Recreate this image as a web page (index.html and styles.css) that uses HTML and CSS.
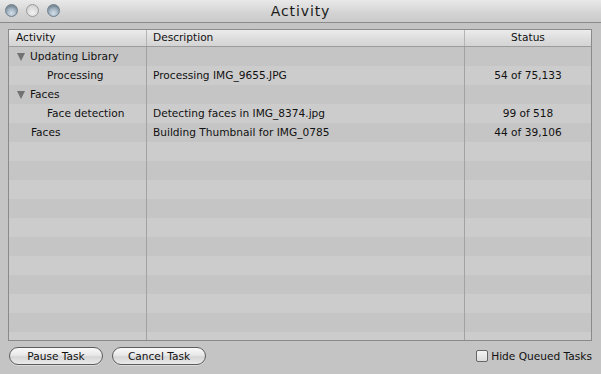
FILE: index.html
```html
<!DOCTYPE html>
<html>
<head>
<meta charset="utf-8">
<link rel="stylesheet" href="styles.css">
</head>
<body>
<div class="window">
  <div class="titlebar">
    <div class="lights">
      <span class="light graphite"></span>
      <span class="light hollow"></span>
      <span class="light graphite"></span>
    </div>
    <div class="title">Activity</div>
  </div>
  <div class="content">
    <div class="table">
      <div class="row head">
        <div class="cell c1">Activity</div>
        <div class="cell c2">Description</div>
        <div class="cell c3">Status</div>
      </div>
      <div class="body">
        <div class="row odd">
          <div class="cell c1 lvl0"><span class="tri"></span>Updating Library</div>
          <div class="cell c2"></div>
          <div class="cell c3"></div>
        </div>
        <div class="row even">
          <div class="cell c1 lvl1">Processing</div>
          <div class="cell c2">Processing IMG_9655.JPG</div>
          <div class="cell c3">54 of 75,133</div>
        </div>
        <div class="row odd">
          <div class="cell c1 lvl0"><span class="tri"></span>Faces</div>
          <div class="cell c2"></div>
          <div class="cell c3"></div>
        </div>
        <div class="row even">
          <div class="cell c1 lvl1">Face detection</div>
          <div class="cell c2">Detecting faces in IMG_8374.jpg</div>
          <div class="cell c3">99 of 518</div>
        </div>
        <div class="row odd">
          <div class="cell c1 lvl0">Faces</div>
          <div class="cell c2">Building Thumbnail for IMG_0785</div>
          <div class="cell c3">44 of 39,106</div>
        </div>
        <div class="row even"><div class="cell c1"></div><div class="cell c2"></div><div class="cell c3"></div></div>
        <div class="row odd"><div class="cell c1"></div><div class="cell c2"></div><div class="cell c3"></div></div>
        <div class="row even"><div class="cell c1"></div><div class="cell c2"></div><div class="cell c3"></div></div>
        <div class="row odd"><div class="cell c1"></div><div class="cell c2"></div><div class="cell c3"></div></div>
        <div class="row even"><div class="cell c1"></div><div class="cell c2"></div><div class="cell c3"></div></div>
        <div class="row odd"><div class="cell c1"></div><div class="cell c2"></div><div class="cell c3"></div></div>
        <div class="row even"><div class="cell c1"></div><div class="cell c2"></div><div class="cell c3"></div></div>
        <div class="row odd"><div class="cell c1"></div><div class="cell c2"></div><div class="cell c3"></div></div>
        <div class="row even"><div class="cell c1"></div><div class="cell c2"></div><div class="cell c3"></div></div>
        <div class="row odd"><div class="cell c1"></div><div class="cell c2"></div><div class="cell c3"></div></div>
        <div class="row even"><div class="cell c1"></div><div class="cell c2"></div><div class="cell c3"></div></div>
      </div>
    </div>
    <div class="footer">
      <div class="buttons">
        <button class="btn pause">Pause Task</button>
        <button class="btn cancel">Cancel Task</button>
      </div>
      <label class="check"><span class="box"></span>Hide Queued Tasks</label>
    </div>
  </div>
</div>
</body>
</html>
```
FILE: styles.css
```css
html, body {
  margin: 0;
  padding: 0;
}
body {
  width: 601px;
  height: 374px;
  overflow: hidden;
  background: #c4c4c4;
  font-family: "DejaVu Sans", "Liberation Sans", sans-serif;
  font-size: 10.6px;
  color: #111;
}
.window {
  display: flex;
  flex-direction: column;
  height: 374px;
}
.titlebar {
  height: 22px;
  border-bottom: 1px solid #8c8c8c;
  background: linear-gradient(#e9e9e9, #d3d3d3 60%, #cbcbcb);
  position: relative;
  display: flex;
  align-items: center;
  justify-content: center;
}
.lights {
  position: absolute;
  left: 5px;
  top: 4px;
  display: flex;
  gap: 8px;
}
.light {
  width: 13px;
  height: 13px;
  border-radius: 50%;
  box-sizing: border-box;
}
.graphite {
  border: 1px solid #6f7f8c;
  background: radial-gradient(circle at 50% 75%, #d4e0ea 0%, #a5b5c3 45%, #7b8c9a 100%);
  box-shadow: inset 0 2px 2px rgba(0,0,0,0.15);
}
.hollow {
  border: 1px solid #9a9a9a;
  background: radial-gradient(circle at 50% 70%, #f2f2f2 0%, #dadada 60%, #c4c4c4 100%);
}
.title {
  font-size: 14px;
  letter-spacing: 0.9px;
  color: #1a1a1a;
  line-height: 22px;
}
.content {
  flex: 1;
  display: flex;
  flex-direction: column;
  padding: 6px 9px 0 8px;
}
.table {
  height: 312px;
  box-sizing: border-box;
  border: 1px solid #8a8a8a;
  display: flex;
  flex-direction: column;
  overflow: hidden;
}
.row {
  display: grid;
  grid-template-columns: 138px 318px 1fr;
  height: 19px;
  flex: none;
}
.cell {
  box-sizing: border-box;
  line-height: 19px;
  white-space: nowrap;
  overflow: hidden;
}
.c1, .c2 {
  border-right: 1px solid #a2a2a2;
}
.c2 { padding-left: 6px; }
.c3 { text-align: center; }
.head {
  height: 16px;
  background: linear-gradient(#ececec, #dedede 50%, #d4d4d4);
  border-bottom: 1px solid #9c9c9c;
}
.head .cell {
  line-height: 15px;
}
.head .c1, .head .c2 {
  border-right-color: #b4b4b4;
}
.head .c1 { padding-left: 7px; }
.body {
  flex: 1;
  overflow: hidden;
}
.odd { background: #c5c5c5; }
.even { background: #cccccc; }
.lvl0 {
  padding-left: 8px;
  display: flex;
  align-items: center;
}
.lvl0:not(:has(.tri)) {
  padding-left: 22px;
}
.tri {
  width: 0;
  height: 0;
  border-left: 4.5px solid transparent;
  border-right: 4.5px solid transparent;
  border-top: 8px solid #727272;
  margin-right: 5px;
  margin-top: 1px;
}
.lvl1 { padding-left: 38px; }
.footer {
  display: flex;
  justify-content: space-between;
  align-items: center;
  padding: 6px 0 0 1px;
}
.buttons {
  display: flex;
  gap: 9px;
}
.btn {
  margin: 0;
  height: 18px;
  width: 94px;
  border: 1px solid #5c5c5c;
  border-radius: 9px;
  background: linear-gradient(#fafafa, #e8e8e8 45%, #d6d6d6 55%, #eaeaea);
  font-family: "DejaVu Sans", "Liberation Sans", sans-serif;
  font-size: 10.6px;
  color: #111;
  padding: 0;
  box-shadow: 0 1px 0 rgba(255,255,255,0.4);
}
.check {
  display: flex;
  align-items: center;
  gap: 3px;
  margin-right: 0;
}
.box {
  width: 12px;
  height: 12px;
  box-sizing: border-box;
  border: 1px solid #666;
  border-radius: 2px;
  background: linear-gradient(#f4f4f4, #dcdcdc);
}
```
